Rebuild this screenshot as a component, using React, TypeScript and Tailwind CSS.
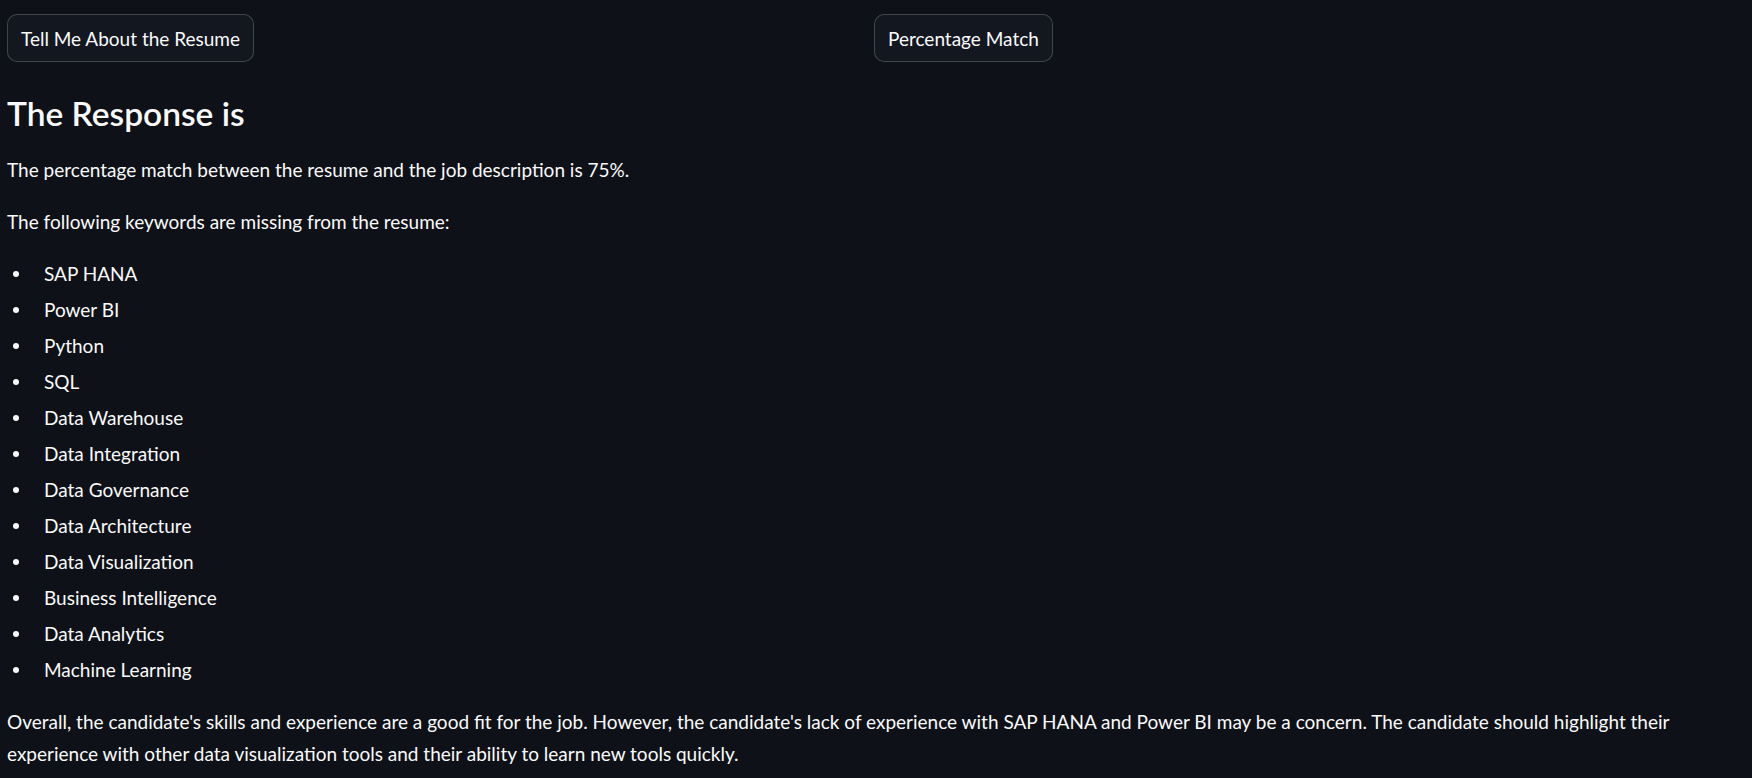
import React from 'react';

const missing = [
  'SAP HANA',
  'Power BI',
  'Python',
  'SQL',
  'Data Warehouse',
  'Data Integration',
  'Data Governance',
  'Data Architecture',
  'Data Visualization',
  'Business Intelligence',
  'Data Analytics',
  'Machine Learning',
];

function Btn({ label }: { label: string }) {
  return (
    <button className="h-[48px] px-[13px] rounded-[10px] border border-[#fafafa]/20 bg-[#131720] text-[19px] text-[#fafafa] leading-none">
      {label}
    </button>
  );
}

export default function App() {
  return (
    <div className="min-h-screen bg-[#0e1117] text-[#fafafa] font-['Lato',sans-serif] px-[7px] pt-[14px]">
      <div className="grid grid-cols-[867px_1fr]">
        <div>
          <Btn label="Tell Me About the Resume" />
        </div>
        <div>
          <Btn label="Percentage Match" />
        </div>
      </div>

      <h3 className="mt-[30px] text-[33.5px] leading-[42px] font-semibold">The Response is</h3>

      <div className="mt-[20px] text-[19px] leading-[32px]">
        <p className="mb-[20px]">The percentage match between the resume and the job description is 75%.</p>
        <p className="mb-[20px]">The following keywords are missing from the resume:</p>
        <ul className="mb-[20px]">
          {missing.map((m) => (
            <li key={m} className="flex items-center mb-[4px]">
              <span className="w-[6px] h-[6px] rounded-full bg-[#fafafa] ml-[6px] mr-[25px]" />
              {m}
            </li>
          ))}
        </ul>
        <p>
          Overall, the candidate's skills and experience are a good fit for the job. However, the candidate's lack of
          experience with SAP HANA and Power BI may be a concern. The candidate should highlight their experience with
          other data visualization tools and their ability to learn new tools quickly.
        </p>
      </div>
    </div>
  );
}
